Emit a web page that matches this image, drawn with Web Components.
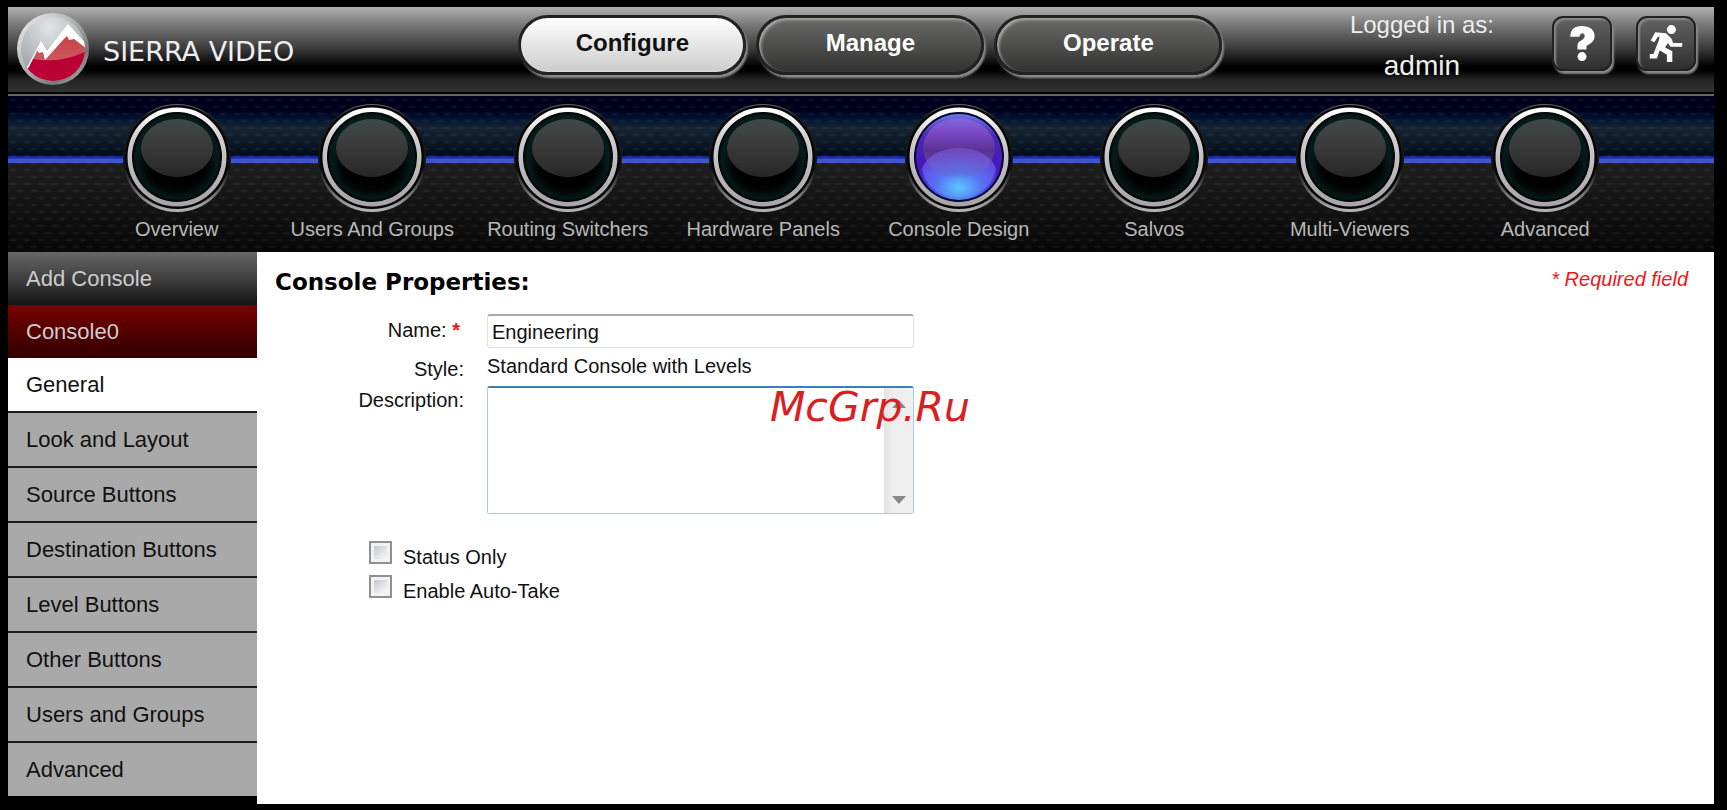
<!DOCTYPE html>
<html lang="en">
<head>
<meta charset="utf-8">
<title>Sierra Video - Console Properties</title>
<style>
    html, body {
        margin: 0;
        background: #000;
    }
    body {
        font-family: "Liberation Sans", Arial, sans-serif;
        font-size: 20px;
        color: #111;
    }
</style>
</head>
<body>
<console-app></console-app>

<script>
(function() {
    "use strict";

    // attaches an open shadow root and fills it from a template string
    function render(host, html) {
        const template = document.createElement('template');
        template.innerHTML = html;
        host.attachShadow({mode: 'open'}).appendChild(template.content.cloneNode(true));
    }

    class BrandLogo extends HTMLElement {
        constructor() {
            super();
            render(this, `
                <style>
                    :host {
                        display: flex;
                        align-items: center;
                        gap: 14px;
                        color: #eee;
                        font: 27px "DejaVu Sans", sans-serif;
                        white-space: nowrap;
                    }
                    svg {
                        width: 72px;
                        height: 72px;
                        flex: none;
                    }
                    span { padding-top: 4px; }
                </style>
                <svg viewBox="0 0 72 72" aria-hidden="true">
                    <defs>
                        <linearGradient id="rim" x1="0" y1="0" x2="1" y2="1">
                            <stop offset="0" stop-color="#f4f4f4"/>
                            <stop offset=".5" stop-color="#aaa"/>
                            <stop offset=".75" stop-color="#777"/>
                            <stop offset="1" stop-color="#ccc"/>
                        </linearGradient>
                        <radialGradient id="sky" cx=".45" cy=".2" r=".7">
                            <stop offset="0" stop-color="#e2e5e6"/>
                            <stop offset="1" stop-color="#9b9fa2"/>
                        </radialGradient>
                        <linearGradient id="rock" x1="0" y1="0" x2="0" y2="1">
                            <stop offset="0" stop-color="#c23b40"/>
                            <stop offset="1" stop-color="#d06468"/>
                        </linearGradient>
                        <clipPath id="disc"><circle cx="36" cy="36" r="32"/></clipPath>
                    </defs>
                    <circle cx="36" cy="36" r="36" fill="url(#rim)"/>
                    <g clip-path="url(#disc)">
                        <rect width="72" height="72" fill="url(#sky)"/>
                        <path d="M11 55L23 34L28 42L52 14L72 34V60H11z" fill="url(#rock)"/>
                        <path d="M10 56L16 46Q44 51 72 37V72H10z" fill="#ba0034"/>
                        <path d="M7 60L24 28L30 38L51 11L70 32V36L57 26L52 27L50 23L46 27L28 47L26 39L22 40L20 37L12 54z" fill="#fff"/>
                    </g>
                </svg>
                <span><slot></slot></span>
            `);
        }
    }

    class ModeTab extends HTMLElement {
        constructor() {
            super();
            render(this, `
                <style>
                    :host {
                        display: block;
                        width: 228px;
                    }
                    button {
                        display: block;
                        width: 100%;
                        height: 60px;
                        padding: 0 0 4px;
                        border: 3px solid #222;
                        border-radius: 30px;
                        background: linear-gradient(#6a6a68, #323232);
                        box-shadow: 2px 3px 2px #8a8a8a, inset 2px 2px 3px #aaa;
                        color: #fff;
                        font: bold 24px "Liberation Sans", Arial, sans-serif;
                        cursor: pointer;
                    }
                    :host([active]) button {
                        background: linear-gradient(#fff, #ccc);
                        box-shadow: 2px 3px 2px #8a8a8a, inset 0 0 2px #fff;
                        color: #111;
                    }
                </style>
                <button type="button"><slot></slot></button>
            `);
        }
    }

    class ToolButton extends HTMLElement {
        constructor() {
            super();
            const icons = {
                help: '<path d="M7 14C7 5 13 2 20 2C28 2 34 6 34 13C34 19 30 21 25 24V28H15V23C15 18 23 18 23 13C23 9 18 9 17 14z"/><circle cx="20" cy="36" r="5"/>',
                exit: '<circle cx="26" cy="6" r="5"/><path d="M3 18L8 9L20 10L26 16L28 21H38V25H25L22 21L19 26L27 30V42H21V34L13 29L10 38H2V33H6L12 18L13 14H11L7 20z"/>'
            };
            render(this, `
                <style>
                    :host { display: block; }
                    button {
                        display: grid;
                        place-items: center;
                        width: 60px;
                        height: 55px;
                        padding: 0;
                        border: 2px solid #222;
                        border-radius: 11px;
                        background: linear-gradient(#626262, #303030);
                        box-shadow: 2px 3px 2px #8a8a8a, inset 2px 2px 2px #888;
                        cursor: pointer;
                    }
                    svg {
                        width: 36px;
                        height: 40px;
                        fill: #fff;
                    }
                </style>
                <button type="button" aria-label="${this.getAttribute('label')}">
                    <svg viewBox="0 0 40 44">${icons[this.getAttribute('icon')]}</svg>
                </button>
            `);
        }
    }

    class KnobLink extends HTMLElement {
        constructor() {
            super();
            const off = `
                <circle cx="60" cy="60" r="45" fill="url(#well)"/>
                <ellipse cx="60" cy="60" rx="34" ry="28" fill="#000" filter="url(#soft)"/>
                <ellipse cx="60" cy="51" rx="36" ry="29" fill="url(#cap)"/>`;
            const on = `
                <circle cx="60" cy="60" r="45" fill="#0a0630"/>
                <circle cx="60" cy="60" r="43" fill="url(#glow)"/>
                <ellipse cx="60" cy="51" rx="36" ry="30" fill="url(#shine)"/>
                <path d="M23 72C32 44 88 44 97 72C90 110 30 110 23 72z" fill="url(#pool)"/>`;
            render(this, `
                <style>
                    :host { display: block; }
                    a {
                        display: flex;
                        flex-direction: column;
                        align-items: center;
                        color: #b8b8b8;
                        line-height: 24px;
                        text-decoration: none;
                        white-space: nowrap;
                    }
                    svg {
                        width: 120px;
                        height: 120px;
                    }
                </style>
                <a href="#">
                    <svg viewBox="0 0 120 120" aria-hidden="true">
                        <defs>
                            <linearGradient id="lip" x1="0" y1="0" x2="0" y2="1">
                                <stop offset="0" stop-color="#666"/>
                                <stop offset=".12" stop-color="#222"/>
                                <stop offset=".6" stop-color="#111"/>
                                <stop offset="1" stop-color="#b8b8b8"/>
                            </linearGradient>
                            <linearGradient id="ring" x1="0" y1="0" x2="0" y2="1">
                                <stop offset="0" stop-color="#fff"/>
                                <stop offset=".3" stop-color="#cfcdcf"/>
                                <stop offset="1" stop-color="#a9a5a9"/>
                            </linearGradient>
                            <radialGradient id="well">
                                <stop offset=".7" stop-color="#041614"/>
                                <stop offset=".92" stop-color="#061c1a"/>
                                <stop offset="1" stop-color="#000"/>
                            </radialGradient>
                            <linearGradient id="cap" x1="0" y1="0" x2="0" y2="1">
                                <stop offset="0" stop-color="#3f4a49"/>
                                <stop offset=".4" stop-color="#3c3c3c"/>
                                <stop offset="1" stop-color="#272727"/>
                            </linearGradient>
                            <radialGradient id="glow" cx=".5" cy=".86" r=".86">
                                <stop offset="0" stop-color="#52b4ff"/>
                                <stop offset=".35" stop-color="#4a50ee"/>
                                <stop offset=".6" stop-color="#4418b8"/>
                                <stop offset=".85" stop-color="#4a28b4"/>
                                <stop offset="1" stop-color="#6a80f0"/>
                            </radialGradient>
                            <radialGradient id="pool" cx=".5" cy=".8" r=".8">
                                <stop offset="0" stop-color="#5cc8ff"/>
                                <stop offset=".4" stop-color="#5878f4" stop-opacity=".75"/>
                                <stop offset="1" stop-color="#8a5ae8" stop-opacity=".5"/>
                            </radialGradient>
                            <linearGradient id="shine" x1="0" y1="0" x2="0" y2="1">
                                <stop offset="0" stop-color="#8468dc"/>
                                <stop offset=".25" stop-color="#7a46c4"/>
                                <stop offset=".55" stop-color="#583292"/>
                                <stop offset="1" stop-color="#6a58b4"/>
                            </linearGradient>
                            <filter id="soft" x="-20%" y="-20%" width="140%" height="150%">
                                <feOffset dy="9"/>
                                <feGaussianBlur stdDeviation="4"/>
                            </filter>
                        </defs>
                        <circle cx="60" cy="61" r="54" fill="url(#lip)"/>
                        <circle cx="60" cy="60" r="52" fill="#050505"/>
                        <circle cx="60" cy="60" r="47" fill="none" stroke="url(#ring)" stroke-width="5"/>
                        ${this.hasAttribute('active') ? on : off}
                    </svg>
                    <slot></slot>
                </a>
            `);
        }
    }

    class KnobBar extends HTMLElement {
        constructor() {
            super();
            render(this, `
                <style>
                    :host { display: block; }
                    nav {
                        display: grid;
                        grid-template-columns: repeat(8, 1fr);
                        padding: 1px 71px 11px;
                        /* mesh dots over the blue band and its bright line */
                        background:
                            radial-gradient(ellipse 5px 2px at 5px 4px, #ffffff12, transparent),
                            radial-gradient(ellipse 5px 2px at 5px 4px, #ffffff12, transparent),
                            linear-gradient(#00001c 0 14px, #001230 22px, #152433 32px, #020c18 60px,
                                #1526a0 60px, #1526a0 62px, #3c54c8 63px, #3c54c8 67px, #1e1e1e 67px, #070707);
                        background-size: 14px 14px, 14px 14px, auto;
                        background-position: 0 0, 7px 7px, 0 0;
                    }
                </style>
                <nav aria-label="Sections"><slot></slot></nav>
            `);
        }
    }

    class AppHeader extends HTMLElement {
        constructor() {
            super();
            render(this, `
                <style>
                    :host { display: block; }
                    header {
                        display: flex;
                        align-items: flex-start;
                        height: 85px;
                        padding-right: 18px;
                        border-bottom: 2px solid #000;
                        background: linear-gradient(#b0b0b0, #767676 22%, #3c3c3c 48%, #000 70%, #000 75%, #222 85%, #343434);
                        color: #eee;
                    }
                    .line {
                        height: 2px;
                        background: #666;
                    }
                    brand-logo {
                        flex: 0 0 30%;
                        box-sizing: border-box;
                        padding: 6px 0 0 9px;
                    }
                    .modes {
                        display: flex;
                        gap: 10px;
                        padding: 8px 0 0 4px;
                    }
                    .user {
                        margin-left: auto;
                        padding-right: 58px;
                        text-align: center;
                        font-size: 24px;
                        line-height: 36px;
                    }
                    .name {
                        font-size: 28px;
                        line-height: 46px;
                    }
                    .tools {
                        display: flex;
                        gap: 24px;
                        padding-top: 9px;
                    }
                </style>
                <header>
                    <brand-logo>SIERRA VIDEO</brand-logo>
                    <div class="modes">
                        <mode-tab active>Configure</mode-tab>
                        <mode-tab>Manage</mode-tab>
                        <mode-tab>Operate</mode-tab>
                    </div>
                    <div class="user">
                        Logged in as:
                        <div class="name"><slot></slot></div>
                    </div>
                    <div class="tools">
                        <tool-button icon="help" label="Help"></tool-button>
                        <tool-button icon="exit" label="Log out"></tool-button>
                    </div>
                </header>
                <div class="line"></div>
            `);
        }
    }

    class SideItem extends HTMLElement {
        constructor() {
            super();
            render(this, `
                <style>
                    :host { display: block; }
                    a {
                        display: block;
                        padding: 0 18px;
                        border-bottom: 2px solid #1c1c1c;
                        background: #a9a9a9;
                        color: #111;
                        font-size: 22px;
                        line-height: 53px;
                        text-decoration: none;
                    }
                    :host([kind=add]) a {
                        border: 0;
                        background: linear-gradient(#666, #161616);
                        color: #ccc;
                    }
                    :host([kind=group]) a {
                        border: 0;
                        background: linear-gradient(#780000, #300000);
                        color: #ccc;
                    }
                    :host([active]) a { background: #fff; }
                    :host(:last-child) a { border: 0; }
                </style>
                <a href="#"><slot></slot></a>
            `);
        }
    }

    class ConsoleForm extends HTMLElement {
        constructor() {
            super();
            render(this, `
                <style>
                    :host {
                        display: block;
                        padding: 14px 26px 0 18px;
                        background: #fff;
                    }
                    .top {
                        display: flex;
                        justify-content: space-between;
                        line-height: 26px;
                    }
                    h1 {
                        margin: 0;
                        font: bold 23px/32px "DejaVu Sans", "Arial Black", sans-serif;
                        color: #000;
                    }
                    em, b {
                        color: #f01418;
                    }
                    .fields {
                        display: grid;
                        grid-template-columns: 189px minmax(0, 427px);
                        grid-template-rows: 34px 38px auto;
                        column-gap: 23px;
                        margin-top: 16px;
                        line-height: 32px;
                    }
                    .label {
                        text-align: right;
                    }
                    .required {
                        padding-right: 4px;
                    }
                    .value {
                        line-height: 36px;
                    }
                    .style {
                        line-height: 42px;
                    }
                    .desc {
                        line-height: 28px;
                    }
                    input[type=text] {
                        box-sizing: border-box;
                        width: 100%;
                        height: 34px;
                        padding: 2px 4px 0;
                        border: 1px solid #dde1e8;
                        border-top: 2px solid #aaa;
                        border-radius: 3px;
                        background: #fff;
                        color: #111;
                        font: inherit;
                    }
                    .area {
                        position: relative;
                        display: flex;
                        height: 125px;
                        border: 1px solid #a8cbe6;
                        border-top: 2px solid #3c7fb1;
                        border-radius: 3px;
                    }
                    textarea {
                        flex: 1;
                        min-width: 0;
                        padding: 4px;
                        border: 0;
                        background: #fff;
                        font: inherit;
                        resize: none;
                        overflow: hidden;
                    }
                    .rail {
                        display: flex;
                        flex-direction: column;
                        justify-content: space-between;
                        align-items: center;
                        box-sizing: border-box;
                        width: 29px;
                        padding: 12px 0 9px;
                        background: linear-gradient(90deg, #e4e4e4, #eee 30%, #f0f0f0);
                    }
                    .rail svg {
                        width: 14px;
                        height: 8px;
                        fill: #888;
                    }
                    /* stamp lies over the right end of the text area */
                    .stamp {
                        position: absolute;
                        left: 282px;
                        top: -4px;
                        color: #d9201f;
                        font: oblique 41px/46px "DejaVu Sans", sans-serif;
                        white-space: nowrap;
                        pointer-events: none;
                    }
                    .checks {
                        display: grid;
                        gap: 2px;
                        padding: 27px 0 0 94px;
                    }
                    .checks label {
                        display: flex;
                        align-items: flex-start;
                        gap: 11px;
                        line-height: 32px;
                    }
                    input[type=checkbox] {
                        appearance: none;
                        width: 23px;
                        height: 23px;
                        margin: 0;
                        border: 2px solid #909090;
                        background: linear-gradient(135deg, #c4c8cd, #fafafa) content-box, #f2f2f2;
                        padding: 3px;
                    }
                    input[type=checkbox]:checked {
                        background: #444 content-box;
                    }
                </style>
                <form>
                    <div class="top">
                        <h1>Console Properties:</h1>
                        <em>* Required field</em>
                    </div>
                    <div class="fields">
                        <label class="label required" for="name">Name: <b>*</b></label>
                        <input type="text" id="name" value="Engineering">
                        <span class="label style">Style:</span>
                        <span class="value">Standard Console with Levels</span>
                        <label class="label desc" for="description">Description:</label>
                        <div class="area">
                            <textarea id="description"></textarea>
                            <div class="rail" aria-hidden="true">
                                <svg viewBox="0 0 14 8"><path d="M0 8L7 0L14 8z"/></svg>
                                <svg viewBox="0 0 14 8"><path d="M0 0L7 8L14 0z"/></svg>
                            </div>
                            <span class="stamp">McGrp.Ru</span>
                        </div>
                    </div>
                    <div class="checks">
                        <label><input type="checkbox">Status Only</label>
                        <label><input type="checkbox">Enable Auto-Take</label>
                    </div>
                </form>
            `);
        }
    }

    class ConsoleApp extends HTMLElement {
        constructor() {
            super();
            render(this, `
                <style>
                    :host {
                        display: flex;
                        flex-direction: column;
                        box-sizing: border-box;
                        min-height: 100vh;
                        padding: 7px 13px 6px 8px;
                        background: #000;
                    }
                    .body {
                        display: grid;
                        grid-template-columns: 249px 1fr;
                        flex: 1;
                    }
                </style>
                <app-header>admin</app-header>
                <knob-bar>
                    <knob-link>Overview</knob-link>
                    <knob-link>Users And Groups</knob-link>
                    <knob-link>Routing Switchers</knob-link>
                    <knob-link>Hardware Panels</knob-link>
                    <knob-link active>Console Design</knob-link>
                    <knob-link>Salvos</knob-link>
                    <knob-link>Multi-Viewers</knob-link>
                    <knob-link>Advanced</knob-link>
                </knob-bar>
                <div class="body">
                    <nav aria-label="Console">
                        <side-item kind="add">Add Console</side-item>
                        <side-item kind="group">Console0</side-item>
                        <side-item active>General</side-item>
                        <side-item>Look and Layout</side-item>
                        <side-item>Source Buttons</side-item>
                        <side-item>Destination Buttons</side-item>
                        <side-item>Level Buttons</side-item>
                        <side-item>Other Buttons</side-item>
                        <side-item>Users and Groups</side-item>
                        <side-item>Advanced</side-item>
                    </nav>
                    <console-form></console-form>
                </div>
            `);
        }
    }

    customElements.define('brand-logo', BrandLogo);
    customElements.define('mode-tab', ModeTab);
    customElements.define('tool-button', ToolButton);
    customElements.define('knob-link', KnobLink);
    customElements.define('knob-bar', KnobBar);
    customElements.define('app-header', AppHeader);
    customElements.define('side-item', SideItem);
    customElements.define('console-form', ConsoleForm);
    customElements.define('console-app', ConsoleApp);
})();
</script>
</body>
</html>
